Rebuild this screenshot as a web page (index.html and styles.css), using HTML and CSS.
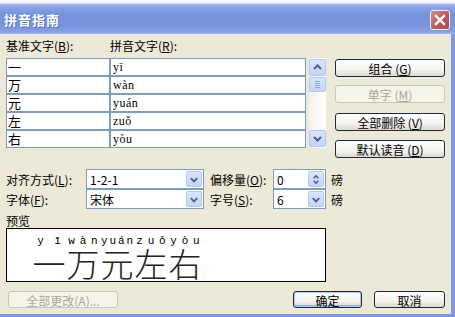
FILE: index.html
```html
<!DOCTYPE html>
<html lang="zh-CN">
<head>
<meta charset="UTF-8">
<title>拼音指南</title>
<link rel="stylesheet" href="styles.css">
</head>
<body>
  <div class="dialog">
    <div class="titlebar">
      <span class="title">拼音指南</span>
      <span class="close">
        <svg width="18" height="18" viewBox="0 0 18 18"><path d="M5 5 L13 13 M13 5 L5 13" stroke="#fff" stroke-width="2.4" stroke-linecap="square"/></svg>
      </span>
    </div>

    <div class="content">
      <div class="top">
        <div class="list-area">
          <div class="heads">
            <span class="head-base">基准文字(<u>B</u>):</span>
            <span>拼音文字(<u>R</u>):</span>
          </div>
          <div class="list">
            <div class="cells">
              <div class="row"><div class="cell base">一</div><div class="cell py">yī</div></div>
              <div class="row"><div class="cell base">万</div><div class="cell py">wàn</div></div>
              <div class="row"><div class="cell base">元</div><div class="cell py">yuán</div></div>
              <div class="row"><div class="cell base">左</div><div class="cell py">zuǒ</div></div>
              <div class="row"><div class="cell base">右</div><div class="cell py">yòu</div></div>
            </div>
            <div class="vscroll">
              <span class="sbtn">
                <svg width="15" height="15" viewBox="0 0 15 15"><path d="M4 9 L7.5 5.5 L11 9" stroke="#4d6185" stroke-width="2" fill="none"/></svg>
              </span>
              <div class="track">
                <span class="thumb">
                  <svg width="15" height="13" viewBox="0 0 15 13"><path d="M5 3.5 H10 M5 5.5 H10 M5 7.5 H10 M5 9.5 H10" stroke="#8ea7e3" stroke-width="1"/></svg>
                </span>
              </div>
              <span class="sbtn">
                <svg width="15" height="15" viewBox="0 0 15 15"><path d="M4 6 L7.5 9.5 L11 6" stroke="#4d6185" stroke-width="2" fill="none"/></svg>
              </span>
            </div>
          </div>
        </div>

        <div class="side">
          <button class="btn">组合 (<u>G</u>)</button>
          <button class="btn disabled btn-single">单字 (<u>M</u>)</button>
          <button class="btn btn-clear">全部删除 (<u>V</u>)</button>
          <button class="btn btn-default">默认读音 (<u>D</u>)</button>
        </div>
      </div>

      <div class="options">
        <span class="opt-label">对齐方式(<u>L</u>):</span>
        <div class="combo">
          <span>1-2-1</span>
          <span class="drop"><svg width="15" height="15" viewBox="0 0 15 15"><path d="M4 6 L7.5 9.5 L11 6" stroke="#4d6185" stroke-width="2" fill="none"/></svg></span>
        </div>
        <span class="opt-label opt-right">偏移量(<u>O</u>):</span>
        <div class="combo">
          <span>0</span>
          <span class="drop"><svg width="15" height="15" viewBox="0 0 15 15"><path d="M5 6 L7.5 3.5 L10 6 M5 9 L7.5 11.5 L10 9" stroke="#4d6185" stroke-width="1.6" fill="none"/></svg></span>
        </div>
        <span class="unit">磅</span>

        <span class="opt-label">字体(<u>F</u>):</span>
        <div class="combo">
          <span>宋体</span>
          <span class="drop"><svg width="15" height="15" viewBox="0 0 15 15"><path d="M4 6 L7.5 9.5 L11 6" stroke="#4d6185" stroke-width="2" fill="none"/></svg></span>
        </div>
        <span class="opt-label opt-right">字号(<u>S</u>):</span>
        <div class="combo">
          <span>6</span>
          <span class="drop"><svg width="15" height="15" viewBox="0 0 15 15"><path d="M4 6 L7.5 9.5 L11 6" stroke="#4d6185" stroke-width="2" fill="none"/></svg></span>
        </div>
        <span class="unit">磅</span>
      </div>

      <div class="preview-label">预览</div>
      <div class="preview">
        <span class="ruby"><span class="rt"><i>y</i><i>ī</i></span><span class="rb">一</span></span>
        <span class="ruby"><span class="rt"><i>w</i><i>à</i><i>n</i></span><span class="rb">万</span></span>
        <span class="ruby"><span class="rt"><i>y</i><i>u</i><i>á</i><i>n</i></span><span class="rb">元</span></span>
        <span class="ruby"><span class="rt"><i>z</i><i>u</i><i>ǒ</i></span><span class="rb">左</span></span>
        <span class="ruby"><span class="rt"><i>y</i><i>ò</i><i>u</i></span><span class="rb">右</span></span>
      </div>

      <div class="footer">
        <button class="btn disabled btn-all">全部更改(A)...</button>
        <button class="btn btn-ok">确定</button>
        <button class="btn btn-cancel">取消</button>
      </div>
    </div>
  </div>
</body>
</html>
```

FILE: styles.css
```css
* {
  box-sizing: border-box;
}

body {
  margin: 0;
  background: #fff;
  font-family: "Noto Sans CJK SC", sans-serif;
  font-size: 12px;
  color: #000;
}

u {
  text-decoration: underline;
  text-underline-offset: 1px;
}

.dialog {
  width: 455px;
  height: 317px;
  display: flex;
  flex-direction: column;
  background: #7c98de;
}

/* title bar */
.titlebar {
  height: 34px;
  display: flex;
  align-items: center;
  justify-content: space-between;
  padding: 4px 5px 0 4px;
  background: linear-gradient(to bottom, #fdfdff 0, #f2f5fd 3px, #a9bdf0 4px, #8aa5e7 7px, #7693dc 14px, #7894dd 26px, #86a1e5 32px, #9fb5ec 34px);
}

.title {
  color: #fff;
  font-weight: bold;
  font-size: 13px;
  letter-spacing: 1px;
  text-shadow: 1px 1px 0 #5a74bd;
}

.close {
  width: 20px;
  height: 20px;
  margin-top: 2px;
  display: flex;
  align-items: center;
  justify-content: center;
  border: 1px solid #eceff8;
  border-radius: 3px;
  background: linear-gradient(135deg, #d48a86, #b8585a 60%, #a94c50);
}

/* dialog body */
.content {
  flex: 1;
  margin: 0 4px 3px 0;
  padding: 5px 6px 0 6px;
  background: #ece9d8;
}

.top {
  display: flex;
  gap: 9px;
}

.list-area {
  width: 320px;
}

.heads {
  display: flex;
  line-height: 14px;
  margin-bottom: 5px;
}

.head-base {
  width: 104px;
}

.list {
  display: flex;
}

.cells {
  width: 300px;
}

.row {
  display: flex;
}

.cell {
  height: 18px;
  line-height: 16px;
  border: 1px solid #7f9db9;
  background: #fff;
}

.cell.base {
  width: 104px;
  padding-left: 1px;
  font-size: 13px;
}

.cell.py {
  width: 196px;
  padding-left: 2px;
  font-family: "Liberation Serif", serif;
  font-size: 12px;
  letter-spacing: 0.5px;
}

/* scrollbar */
.vscroll {
  width: 17px;
  height: 90px;
  margin-left: 3px;
  display: flex;
  flex-direction: column;
  padding: 1px 0;
  background: linear-gradient(to right, #f3f1ec, #fefefb);
}

.sbtn,
.thumb,
.drop {
  display: flex;
  align-items: center;
  justify-content: center;
  border: 1px solid #b7c8f4;
  border-radius: 2px;
  background: linear-gradient(to bottom, #dbe5fd, #c4d4fb);
}

.sbtn {
  height: 17px;
}

.track {
  flex: 1;
  padding-top: 1px;
}

.thumb {
  height: 15px;
}

/* buttons */
.side {
  width: 110px;
  padding-top: 20px;
  display: flex;
  flex-direction: column;
}

.btn {
  height: 18px;
  padding: 0;
  font: inherit;
  color: #000;
  border: 1px solid #1e2a3c;
  border-radius: 3px;
  background: linear-gradient(to bottom, #ffffff, #f4f3ee 60%, #dcd8cc);
}

.btn.disabled {
  color: #aca899;
  border-color: #c9c7ba;
  background: #f5f4ea;
}

.btn-single {
  margin-top: 8px;
}

.btn-clear {
  margin-top: 10px;
}

.btn-default {
  margin-top: 9px;
}

/* alignment, font and size options */
.options {
  display: grid;
  grid-template-columns: 80px 118px 69px 53px auto;
  grid-template-rows: 20px 20px;
  align-items: center;
  margin-top: 11px;
}

.opt-right {
  padding-left: 6px;
}

.combo {
  height: 20px;
  display: flex;
  align-items: center;
  justify-content: space-between;
  padding: 1px 1px 1px 3px;
  border: 1px solid #7f9db9;
  background: #fff;
}

.drop {
  width: 16px;
  height: 16px;
}

.unit {
  padding-left: 5px;
}

/* preview */
.preview-label {
  margin-top: 5px;
  line-height: 14px;
}

.preview {
  width: 320px;
  height: 54px;
  padding: 6px 0 0 25px;
  display: flex;
  border: 1px solid #000;
  background: #fff;
}

.ruby {
  width: 34px;
  display: flex;
  flex-direction: column;
}

.rt {
  display: flex;
  justify-content: space-around;
  height: 12px;
  line-height: 12px;
  font-family: "Liberation Mono", monospace;
  font-size: 11px;
}

.rt i {
  font-style: normal;
}

.rb {
  text-align: center;
  font-size: 33px;
  line-height: 33px;
  font-weight: 300;
  color: #222;
}

/* footer */
.footer {
  display: flex;
  margin-top: 9px;
}

.footer .btn {
  height: 17px;
}

.btn-all {
  width: 110px;
  margin-left: 2px;
}

.btn-ok {
  width: 69px;
  margin-left: auto;
  box-shadow: inset 0 0 0 1px #b2c8f5, inset 0 -1px 0 1px #8fadee;
}

.btn-cancel {
  width: 71px;
  margin-left: 12px;
}
```
